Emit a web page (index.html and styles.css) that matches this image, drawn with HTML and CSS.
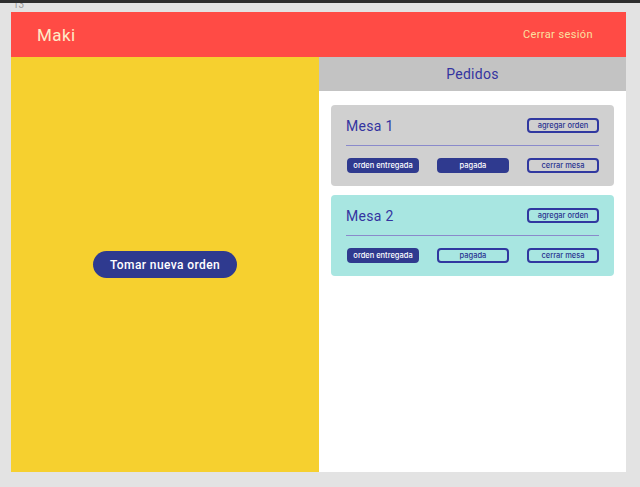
FILE: index.html
```html
<!DOCTYPE html>
<html lang="es">
<head>
<meta charset="utf-8">
<title>Maki</title>
<link rel="stylesheet" href="styles.css">
</head>
<body>
<div class="topbar"></div>
<div class="label">13</div>
<div class="frame">
  <header class="header">
    <span class="logo">Maki</span>
    <span class="logout">Cerrar sesión</span>
  </header>
  <main class="main">
    <section class="left">
      <button class="new-order">Tomar nueva orden</button>
    </section>
    <section class="right">
      <div class="pedidos">Pedidos</div>
      <div class="cards">
        <div class="card card-gray">
          <div class="card-top">
            <span class="mesa">Mesa 1</span>
            <button class="btn outline">agregar orden</button>
          </div>
          <div class="divider"></div>
          <div class="card-actions">
            <button class="btn filled">orden entregada</button>
            <button class="btn filled">pagada</button>
            <button class="btn outline">cerrar mesa</button>
          </div>
        </div>
        <div class="card card-teal">
          <div class="card-top">
            <span class="mesa">Mesa 2</span>
            <button class="btn outline">agregar orden</button>
          </div>
          <div class="divider"></div>
          <div class="card-actions">
            <button class="btn filled">orden entregada</button>
            <button class="btn outline">pagada</button>
            <button class="btn outline">cerrar mesa</button>
          </div>
        </div>
      </div>
    </section>
  </main>
</div>
</body>
</html>
```
FILE: styles.css
```css
* { box-sizing: border-box; }
html, body { margin: 0; padding: 0; }
body {
  background: #e3e3e3;
  font-family: Roboto, "Liberation Sans", sans-serif;
  width: 640px;
  height: 487px;
  overflow: hidden;
}
.topbar { height: 3px; background: #2e2e2e; }
.label {
  height: 9px;
  padding-left: 13px;
  font-size: 10px;
  line-height: 4px;
  color: #9a9a9a;
  overflow: hidden;
}
.frame {
  margin-left: 11px;
  width: 615px;
  height: 460px;
  display: flex;
  flex-direction: column;
}
.header {
  height: 45px;
  background: #ff4b45;
  display: flex;
  align-items: center;
  justify-content: space-between;
  padding: 0 33px 0 26px;
}
.logo {
  font-size: 17px;
  color: #fdebc8;
  letter-spacing: 0.4px;
}
.logout {
  font-size: 11px;
  color: #fbe0a0;
  letter-spacing: 0.4px;
}
.main {
  flex: 1;
  display: flex;
}
.left {
  width: 308px;
  background: #f6d02f;
  display: flex;
  align-items: center;
  justify-content: center;
}
.new-order {
  width: 144px;
  height: 27px;
  border: none;
  border-radius: 14px;
  background: #2f3a8f;
  color: #ffffff;
  font-family: Roboto, "Liberation Sans", sans-serif;
  font-size: 12px;
  font-weight: 500;
  letter-spacing: 0.4px;
  padding: 0;
}
.right {
  flex: 1;
  background: #ffffff;
  display: flex;
  flex-direction: column;
}
.pedidos {
  height: 34px;
  background: #c3c3c3;
  color: #3434a0;
  font-size: 14px;
  letter-spacing: 0.3px;
  display: flex;
  align-items: center;
  justify-content: center;
}
.cards {
  padding: 14px 12px 0 12px;
  display: flex;
  flex-direction: column;
  gap: 9px;
}
.card {
  height: 81px;
  border-radius: 4px;
  padding: 13px 15px 0 15px;
}
.card-gray { background: #d0d0d0; }
.card-teal { background: #a8e6e1; }
.card-top {
  display: flex;
  justify-content: space-between;
  align-items: center;
  height: 15px;
}
.mesa {
  font-size: 14px;
  color: #3434a0;
  letter-spacing: 0.3px;
}
.divider {
  height: 1px;
  background: #8a8acb;
  margin: 12px 0 12px 0;
}
.card-actions {
  display: flex;
  justify-content: space-between;
  padding-left: 1px;
}
.btn {
  width: 72px;
  height: 15px;
  border-radius: 4px;
  font-family: Inter, Roboto, "Liberation Sans", sans-serif;
  font-size: 7.5px;
  font-weight: 500;
  padding: 0;
  line-height: 1;
}
.btn.outline {
  background: transparent;
  border: 2px solid #3038a0;
  color: #2a3390;
}
.btn.filled {
  background: #2f3a8f;
  border: 2px solid #2f3a8f;
  color: #ffffff;
}
```
